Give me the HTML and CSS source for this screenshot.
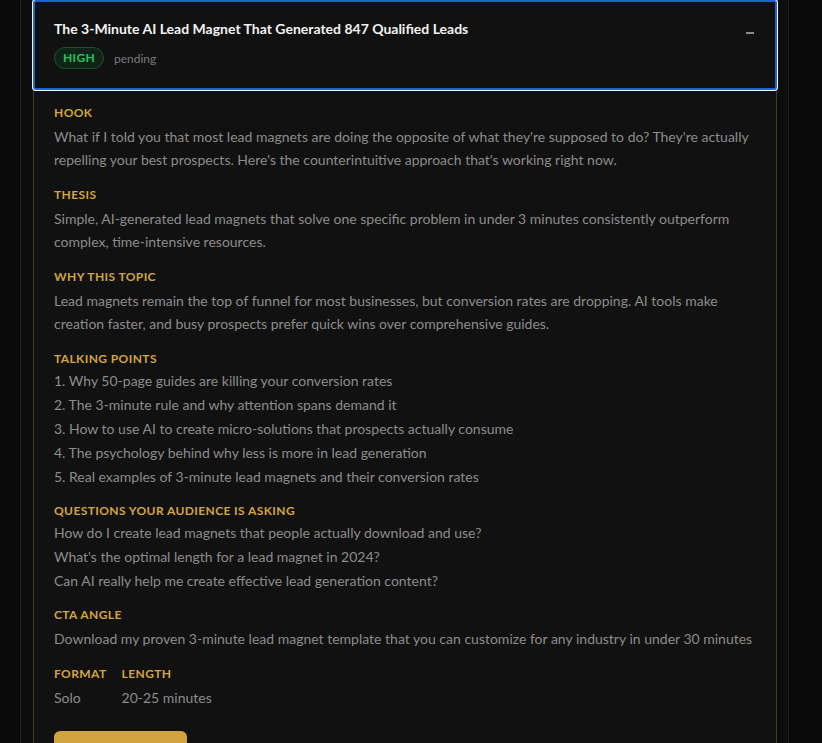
FILE: index.html
```html
<!DOCTYPE html>
<html lang="en">
<head>
  <meta charset="UTF-8">
  <meta name="viewport" content="width=device-width, initial-scale=1.0">
  <title>Episode Ideas</title>
  <link rel="stylesheet" href="styles.css">
</head>
<body>

  <div class="ideas-panel">
    <div class="idea-card">

      <button class="idea-header" type="button">
        <div class="idea-heading">
          <h2 class="idea-title">The 3-Minute AI Lead Magnet That Generated 847 Qualified Leads</h2>
          <div class="idea-meta">
            <span class="priority-badge">HIGH</span>
            <span class="status-text">pending</span>
          </div>
        </div>
        <span class="collapse-icon"></span>
      </button>

      <div class="idea-body">
        <div class="idea-section">
          <div class="section-label">Hook</div>
          <p class="section-text">What if I told you that most lead magnets are doing the opposite of what they're supposed to do? They're actually repelling your best prospects. Here's the counterintuitive approach that's working right now.</p>
        </div>

        <div class="idea-section">
          <div class="section-label">Thesis</div>
          <p class="section-text">Simple, AI-generated lead magnets that solve one specific problem in under 3 minutes consistently outperform complex, time-intensive resources.</p>
        </div>

        <div class="idea-section">
          <div class="section-label">Why this topic</div>
          <p class="section-text">Lead magnets remain the top of funnel for most businesses, but conversion rates are dropping. AI tools make creation faster, and busy prospects prefer quick wins over comprehensive guides.</p>
        </div>

        <div class="idea-section list-section">
          <div class="section-label">Talking points</div>
          <ul class="section-list">
            <li>1. Why 50-page guides are killing your conversion rates</li>
            <li>2. The 3-minute rule and why attention spans demand it</li>
            <li>3. How to use AI to create micro-solutions that prospects actually consume</li>
            <li>4. The psychology behind why less is more in lead generation</li>
            <li>5. Real examples of 3-minute lead magnets and their conversion rates</li>
          </ul>
        </div>

        <div class="idea-section list-section">
          <div class="section-label">Questions your audience is asking</div>
          <ul class="section-list">
            <li>How do I create lead magnets that people actually download and use?</li>
            <li>What's the optimal length for a lead magnet in 2024?</li>
            <li>Can AI really help me create effective lead generation content?</li>
          </ul>
        </div>

        <div class="idea-section">
          <div class="section-label">CTA angle</div>
          <p class="section-text">Download my proven 3-minute lead magnet template that you can customize for any industry in under 30 minutes</p>
        </div>

        <div class="idea-specs">
          <div class="spec">
            <div class="section-label">Format</div>
            <p class="section-text">Solo</p>
          </div>
          <div class="spec">
            <div class="section-label">Length</div>
            <p class="section-text">20-25 minutes</p>
          </div>
        </div>

        <button class="approve-btn" type="button">Approve idea</button>
      </div>

    </div>
  </div>

</body>
</html>
```

FILE: styles.css
```css
body {
  font-family: 'Lato', 'Noto Sans', sans-serif;
  margin: 0;
  background-color: #0a0a0a;
  min-height: 100vh;
  overflow: hidden;
}

.ideas-panel {
  margin-left: 20px;
  width: 744px;
  min-height: 100vh;
  padding: 0 11px 0 12px;
  background-color: #0d0d0d;
  border-left: 1px solid #1f1f1f;
  border-right: 1px solid #1f1f1f;
}

.idea-card {
  background-color: #111;
  border: 1px solid #4a3c1d;
  border-top: none;
  border-radius: 0 0 8px 8px;
}

.idea-header {
  display: flex;
  justify-content: space-between;
  align-items: flex-start;
  width: calc(100% + 2px);
  margin: 0 -1px;
  padding: 17px 20px 19px 19px;
  background-color: #111;
  border: 2px solid #1b63d6;
  border-radius: 3px;
  box-shadow: 0 0 0 1px #fff;
  text-align: left;
  font-family: inherit;
  cursor: pointer;
}

.idea-title {
  margin: 0;
  font-size: 14px;
  font-weight: 700;
  line-height: 20px;
  color: #f2f2f2;
}

.idea-meta {
  display: flex;
  align-items: center;
  gap: 10px;
  margin-top: 8px;
}

.priority-badge {
  display: inline-block;
  padding: 2px 8px;
  font-size: 12px;
  font-weight: 700;
  line-height: 16px;
  letter-spacing: 0.3px;
  color: #22c55e;
  background-color: #0f2417;
  border: 1px solid #1b5230;
  border-radius: 11px;
}

.status-text {
  font-size: 12px;
  color: #7a7a7a;
}

.collapse-icon {
  width: 8px;
  height: 2px;
  margin-top: 13px;
  margin-right: 1px;
  background-color: #8a8a8a;
}

.idea-body {
  padding: 15px 20px 0 20px;
}

.idea-section {
  margin-bottom: 16px;
}

.list-section {
  margin-bottom: 14px;
}

.section-label {
  font-size: 12px;
  font-weight: 700;
  line-height: 16px;
  letter-spacing: 0.4px;
  text-transform: uppercase;
  color: #d4a53b;
  margin-bottom: 4px;
}

.section-text {
  margin: 0;
  font-size: 14px;
  line-height: 23px;
  color: #8c8c8c;
}

.section-list {
  list-style: none;
  margin: -2px 0 0 0;
  padding: 0;
  font-size: 14px;
  line-height: 24px;
  color: #8c8c8c;
}

.idea-specs {
  display: flex;
  gap: 15px;
}

.approve-btn {
  display: block;
  margin-top: 22px;
  width: 133px;
  height: 36px;
  font-family: inherit;
  font-size: 14px;
  font-weight: 700;
  color: #111;
  background-color: #d1a33f;
  border: none;
  border-radius: 6px;
}
```
